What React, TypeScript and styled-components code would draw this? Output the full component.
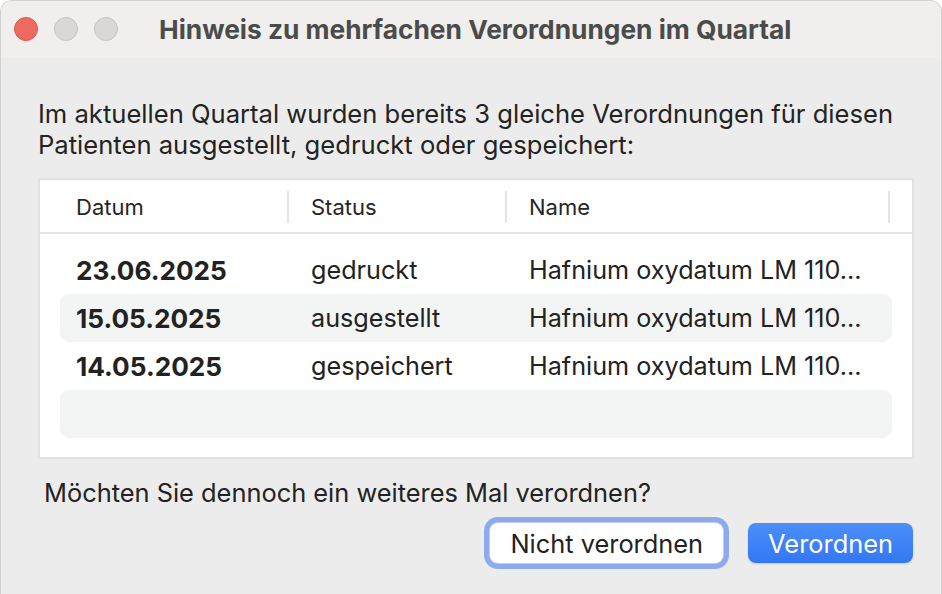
import React from "react";
import styled, { createGlobalStyle } from "styled-components";

const GlobalStyle = createGlobalStyle`
  html, body {
    margin: 0;
    padding: 0;
    background: #ffffff;
  }
  body {
    font-family: Inter, "Noto Sans", "Liberation Sans", sans-serif;
    color: #222222;
    -webkit-font-smoothing: antialiased;
  }
`;

const Window = styled.div`
  width: 942px;
  height: 594px;
  box-sizing: border-box;
  background: #ececec;
  border: 1px solid #d2d2d2;
  border-bottom: none;
  border-radius: 12px 12px 0 0;
  overflow: hidden;
  display: flex;
  flex-direction: column;
`;

const TitleBar = styled.div`
  height: 56px;
  flex-shrink: 0;
  background: #f0efee;
  display: flex;
  align-items: center;
  padding-left: 13px;
`;

const Lights = styled.div`
  display: flex;
  gap: 16px;
`;

const Light = styled.span<{ $color: string; $ring: string }>`
  width: 24px;
  height: 24px;
  border-radius: 50%;
  box-sizing: border-box;
  background: ${(p) => p.$color};
  border: 1px solid ${(p) => p.$ring};
`;

const Title = styled.h1`
  margin: 0 0 0 41px;
  font-size: 26.3px;
  font-weight: 700;
  color: #4b4b4b;
`;

const Body = styled.div`
  flex: 1;
  display: flex;
  flex-direction: column;
  padding: 41px 28px 0 37px;
`;

const Intro = styled.p`
  margin: 0;
  font-size: 25.6px;
  line-height: 31px;
  color: #232323;
`;

const Table = styled.div`
  margin-top: 18px;
  width: 876px;
  height: 281px;
  box-sizing: border-box;
  background: #ffffff;
  border: 2px solid #e2e2e2;
  display: flex;
  flex-direction: column;
`;

const HeaderRow = styled.div`
  height: 54px;
  flex-shrink: 0;
  box-sizing: border-box;
  border-bottom: 2px solid #e6e6e6;
  display: grid;
  grid-template-columns: 249px 218px 383px;
  align-items: center;
  padding-top: 2px;
`;

const HeaderCell = styled.div<{ $divider?: boolean }>`
  height: 32px;
  display: flex;
  align-items: center;
  padding-left: 36px;
  font-size: 22px;
  color: #262626;
  box-sizing: border-box;
  border-right: ${(p) => (p.$divider ? "2px solid #e4e4e4" : "none")};
  &:nth-child(2),
  &:nth-child(3) {
    padding-left: 22px;
  }
`;

const Rows = styled.div`
  padding: 12px 20px 0 20px;
  display: flex;
  flex-direction: column;
`;

const Row = styled.div<{ $striped?: boolean }>`
  height: 48px;
  border-radius: 9px;
  background: ${(p) => (p.$striped ? "#f3f4f4" : "transparent")};
  display: grid;
  grid-template-columns: 251px 218px 1fr;
  align-items: center;
  font-size: 25.2px;
  color: #222222;
`;

const DateCell = styled.div`
  padding-left: 16px;
  font-size: 26.2px;
  font-weight: 700;
`;

const Cell = styled.div`
  white-space: nowrap;
  overflow: hidden;
  text-overflow: ellipsis;
`;

const Question = styled.p`
  margin: 18px 0 0 6px;
  font-size: 25.4px;
  line-height: 31px;
  color: #232323;
`;

const Actions = styled.div`
  display: flex;
  justify-content: flex-end;
  align-items: center;
  gap: 25px;
  margin-top: 15px;
`;

const SecondaryButton = styled.button`
  height: 40px;
  padding: 0 20px;
  border: none;
  border-radius: 8px;
  background: #ffffff;
  font-family: inherit;
  font-size: 25.4px;
  color: #222222;
  box-shadow: 0 0 0 1px #c7cbe0, 0 0 0 6px #8eaaee;
`;

const PrimaryButton = styled.button`
  height: 40px;
  padding: 0 20px;
  border: none;
  border-radius: 8px;
  background: linear-gradient(#4b8ff8, #3477f5);
  font-family: inherit;
  font-size: 25.4px;
  color: #ffffff;
  box-shadow: 0 1px 2px rgba(0, 0, 0, 0.15);
`;

const entries = [
  { date: "23.06.2025", status: "gedruckt", name: "Hafnium oxydatum LM 110..." },
  { date: "15.05.2025", status: "ausgestellt", name: "Hafnium oxydatum LM 110..." },
  { date: "14.05.2025", status: "gespeichert", name: "Hafnium oxydatum LM 110..." },
];

export default function App() {
  return (
    <>
      <GlobalStyle />
      <Window>
        <TitleBar>
          <Lights>
            <Light $color="#ee6a5e" $ring="#d85a4f" />
            <Light $color="#d9d8d7" $ring="#c6c5c4" />
            <Light $color="#d9d8d7" $ring="#c6c5c4" />
          </Lights>
          <Title>Hinweis zu mehrfachen Verordnungen im Quartal</Title>
        </TitleBar>
        <Body>
          <Intro>
            Im aktuellen Quartal wurden bereits 3 gleiche Verordnungen für diesen
            <br />
            Patienten ausgestellt, gedruckt oder gespeichert:
          </Intro>
          <Table>
            <HeaderRow>
              <HeaderCell $divider>Datum</HeaderCell>
              <HeaderCell $divider>Status</HeaderCell>
              <HeaderCell $divider>Name</HeaderCell>
            </HeaderRow>
            <Rows>
              {entries.map((e, i) => (
                <Row key={e.date} $striped={i % 2 === 1}>
                  <DateCell>{e.date}</DateCell>
                  <Cell>{e.status}</Cell>
                  <Cell>{e.name}</Cell>
                </Row>
              ))}
              <Row $striped />
            </Rows>
          </Table>
          <Question>Möchten Sie dennoch ein weiteres Mal verordnen?</Question>
          <Actions>
            <SecondaryButton>Nicht verordnen</SecondaryButton>
            <PrimaryButton>Verordnen</PrimaryButton>
          </Actions>
        </Body>
      </Window>
    </>
  );
}
